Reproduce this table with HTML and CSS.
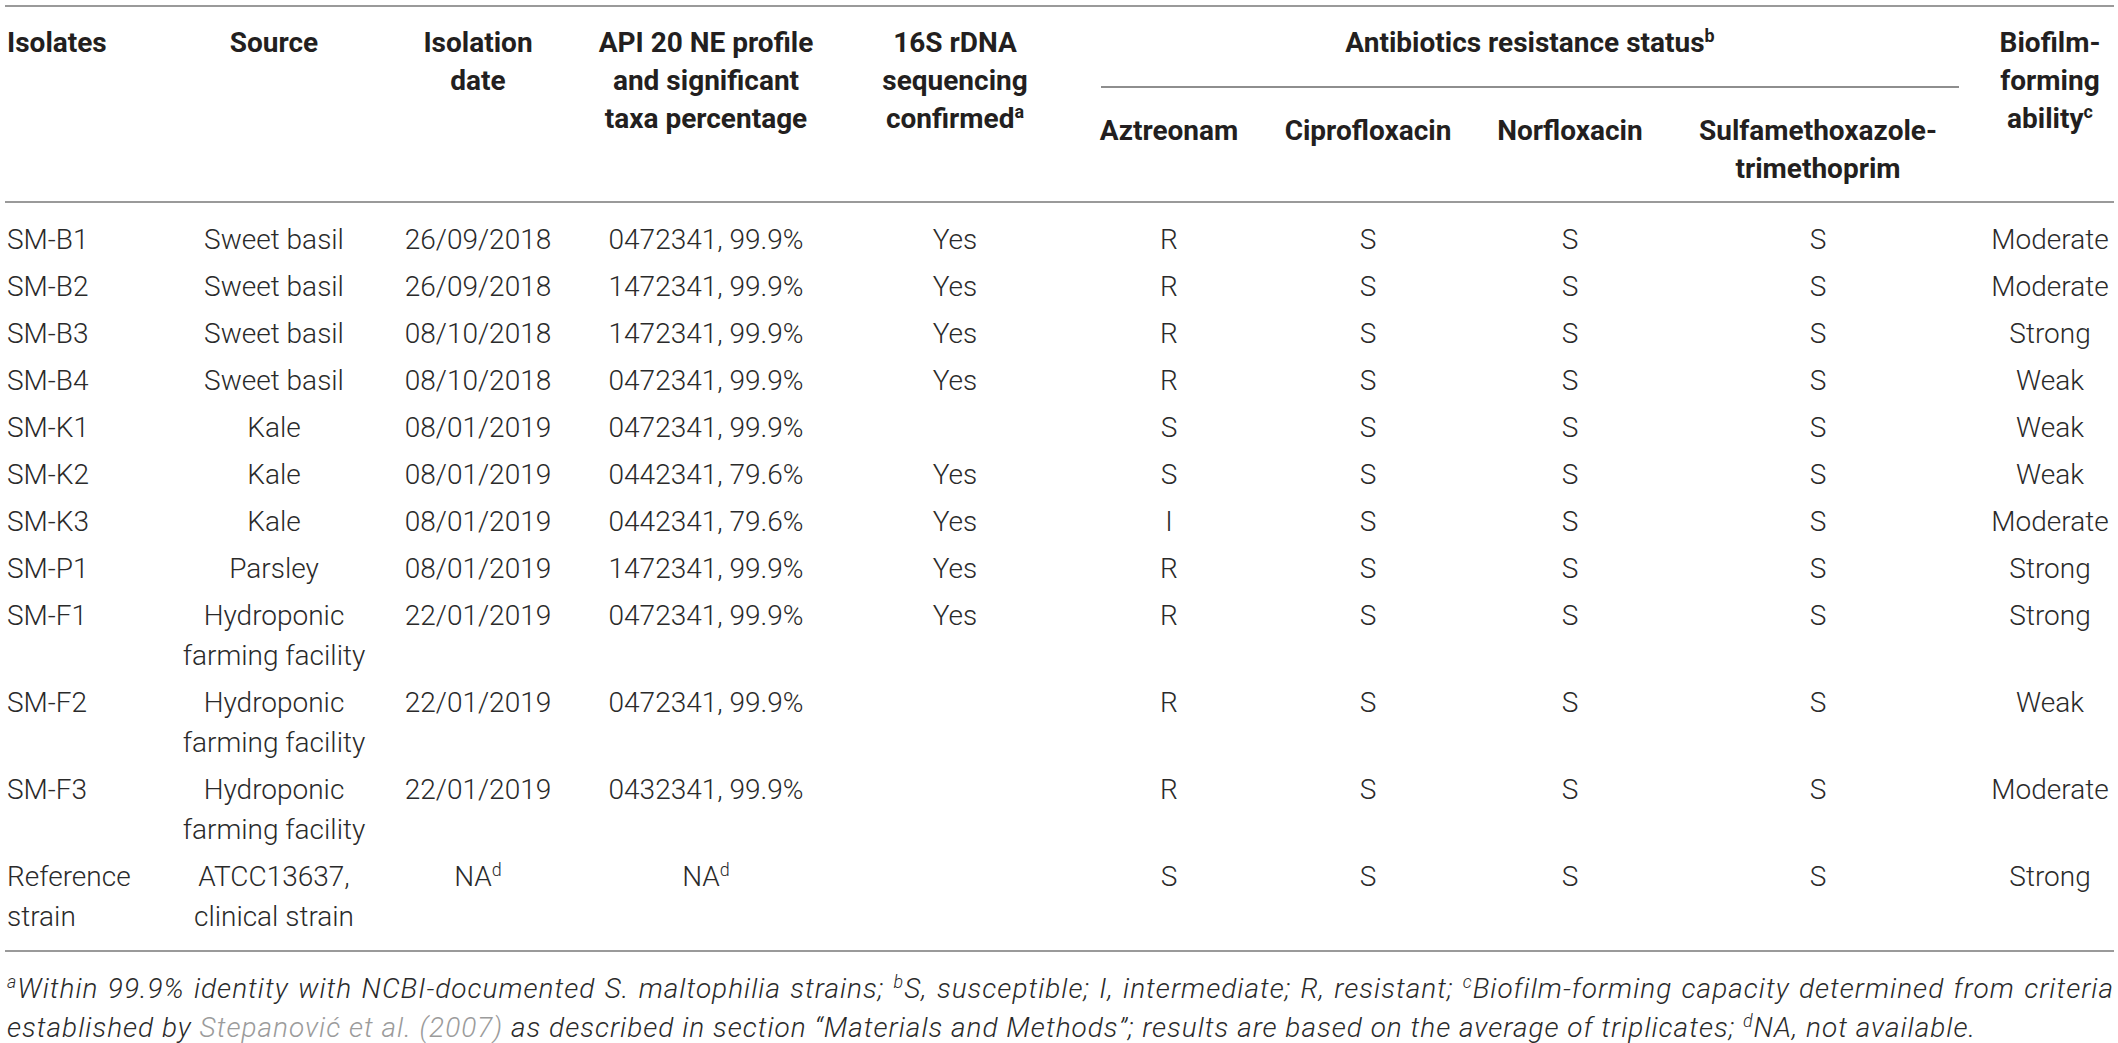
FILE: index.html
```html
<!DOCTYPE html>
<html lang="en">
<head>
<meta charset="utf-8">
<title>Table: S. maltophilia isolates</title>
<link rel="stylesheet" href="styles.css">
</head>
<body>
<div class="page">
  <table class="data">
    <colgroup>
      <col class="c-iso"><col class="c-src"><col class="c-date"><col class="c-api"><col class="c-16s">
      <col class="c-azt"><col class="c-cip"><col class="c-nor"><col class="c-sul"><col class="c-bio">
    </colgroup>
    <thead>
      <tr class="hrow1">
        <th rowspan="2" class="left">Isolates</th>
        <th rowspan="2">Source</th>
        <th rowspan="2">Isolation<br>date</th>
        <th rowspan="2">API 20 NE profile<br>and significant<br>taxa percentage</th>
        <th rowspan="2">16S rDNA<br>sequencing<br>confirmed<sup>a</sup></th>
        <th colspan="4" class="group"><div class="group-label">Antibiotics resistance status<sup>b</sup></div></th>
        <th rowspan="2" class="last">Biofilm-<br>forming<br>ability<sup>c</sup></th>
      </tr>
      <tr class="hrow2">
        <th>Aztreonam</th>
        <th>Ciprofloxacin</th>
        <th>Norfloxacin</th>
        <th>Sulfamethoxazole-<br>trimethoprim</th>
      </tr>
    </thead>
    <tbody>
      <tr><td class="left">SM-B1</td><td>Sweet basil</td><td>26/09/2018</td><td>0472341, 99.9%</td><td>Yes</td><td>R</td><td>S</td><td>S</td><td>S</td><td class="last">Moderate</td></tr>
      <tr><td class="left">SM-B2</td><td>Sweet basil</td><td>26/09/2018</td><td>1472341, 99.9%</td><td>Yes</td><td>R</td><td>S</td><td>S</td><td>S</td><td class="last">Moderate</td></tr>
      <tr><td class="left">SM-B3</td><td>Sweet basil</td><td>08/10/2018</td><td>1472341, 99.9%</td><td>Yes</td><td>R</td><td>S</td><td>S</td><td>S</td><td class="last">Strong</td></tr>
      <tr><td class="left">SM-B4</td><td>Sweet basil</td><td>08/10/2018</td><td>0472341, 99.9%</td><td>Yes</td><td>R</td><td>S</td><td>S</td><td>S</td><td class="last">Weak</td></tr>
      <tr><td class="left">SM-K1</td><td>Kale</td><td>08/01/2019</td><td>0472341, 99.9%</td><td></td><td>S</td><td>S</td><td>S</td><td>S</td><td class="last">Weak</td></tr>
      <tr><td class="left">SM-K2</td><td>Kale</td><td>08/01/2019</td><td>0442341, 79.6%</td><td>Yes</td><td>S</td><td>S</td><td>S</td><td>S</td><td class="last">Weak</td></tr>
      <tr><td class="left">SM-K3</td><td>Kale</td><td>08/01/2019</td><td>0442341, 79.6%</td><td>Yes</td><td>I</td><td>S</td><td>S</td><td>S</td><td class="last">Moderate</td></tr>
      <tr><td class="left">SM-P1</td><td>Parsley</td><td>08/01/2019</td><td>1472341, 99.9%</td><td>Yes</td><td>R</td><td>S</td><td>S</td><td>S</td><td class="last">Strong</td></tr>
      <tr><td class="left">SM-F1</td><td>Hydroponic<br>farming facility</td><td>22/01/2019</td><td>0472341, 99.9%</td><td>Yes</td><td>R</td><td>S</td><td>S</td><td>S</td><td class="last">Strong</td></tr>
      <tr><td class="left">SM-F2</td><td>Hydroponic<br>farming facility</td><td>22/01/2019</td><td>0472341, 99.9%</td><td></td><td>R</td><td>S</td><td>S</td><td>S</td><td class="last">Weak</td></tr>
      <tr><td class="left">SM-F3</td><td>Hydroponic<br>farming facility</td><td>22/01/2019</td><td>0432341, 99.9%</td><td></td><td>R</td><td>S</td><td>S</td><td>S</td><td class="last">Moderate</td></tr>
      <tr class="final"><td class="left">Reference<br>strain</td><td>ATCC13637,<br>clinical strain</td><td>NA<sup>d</sup></td><td>NA<sup>d</sup></td><td></td><td>S</td><td>S</td><td>S</td><td>S</td><td class="last">Strong</td></tr>
    </tbody>
  </table>
  <p class="notes">
    <span class="note-line full"><sup>a</sup>Within 99.9% identity with NCBI-documented S. maltophilia strains; <sup>b</sup>S, susceptible; I, intermediate; R, resistant; <sup>c</sup>Biofilm-forming capacity determined from criteria</span>
    <span class="note-line">established by <a class="ref">Stepanović et al. (2007)</a> as described in section “Materials and Methods”; results are based on the average of triplicates; <sup>d</sup>NA, not available.</span>
  </p>
</div>
</body>
</html>
```

FILE: styles.css
```css
html, body {
  margin: 0;
  padding: 0;
  background: #ffffff;
}

.page {
  padding: 5px 4px 0 5px;
  font-family: Roboto, "Liberation Sans", sans-serif;
  color: #2a2a2a;
}

.data {
  table-layout: fixed;
  width: 2109px;
  border-collapse: collapse;
  border-top: 2px solid #9a9a9a;
  font-size: 28px;
}

.c-iso { width: 167px; }
.c-src { width: 204px; }
.c-date { width: 204px; }
.c-api { width: 252px; }
.c-16s { width: 246px; }
.c-azt { width: 182px; }
.c-cip { width: 216px; }
.c-nor { width: 188px; }
.c-sul { width: 308px; }
.c-bio { width: 142px; }

.data thead {
  border-bottom: 2px solid #9a9a9a;
}

.data th {
  font-weight: 700;
  color: #231f20;
  line-height: 38px;
  text-align: center;
  vertical-align: top;
  white-space: nowrap;
  padding: 17px 0 0 0;
}

.hrow1 th.group {
  padding: 17px 0 0 0;
}

.group-label {
  margin: 0 13px 0 23px;
  padding-bottom: 24px;
  border-bottom: 2px solid #8e8e8e;
}

.hrow2 th {
  padding: 24px 0 13px 0;
}

.data td {
  font-weight: 300;
  line-height: 40px;
  text-align: center;
  vertical-align: top;
  white-space: nowrap;
  padding: 4px 0 3px 0;
}

.data tbody tr:first-child td {
  padding-top: 17px;
}

.data tbody tr.final td {
  padding-bottom: 13px;
}

.data tbody {
  border-bottom: 2px solid #9a9a9a;
}

.data th.left,
.data td.left {
  text-align: left;
  padding-left: 2px;
}

.data th.last,
.data td.last {
  padding-left: 14px;
}

sup {
  font-size: 0.64em;
  line-height: 0;
  vertical-align: baseline;
  position: relative;
  top: -0.55em;
}

.notes {
  margin: 17px 0 0 0;
  padding-left: 2px;
  width: 2107px;
  font-size: 28px;
  font-weight: 300;
  font-style: italic;
  letter-spacing: 1px;
  line-height: 39px;
  color: #2a2a2a;
}

.note-line {
  display: block;
  white-space: nowrap;
}

.note-line.full {
  text-align: justify;
  text-align-last: justify;
  white-space: normal;
}

.ref {
  color: #9b9b9b;
  text-decoration: none;
}
```
